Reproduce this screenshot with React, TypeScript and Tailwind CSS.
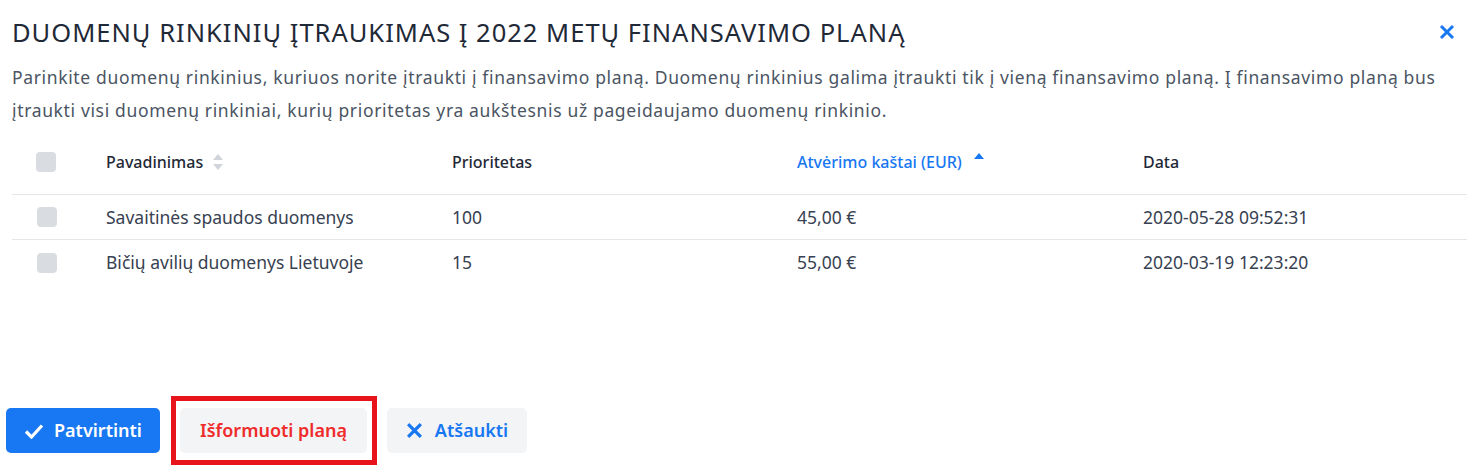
import React from "react";

const rows = [
  { name: "Savaitinės spaudos duomenys", priority: "100", cost: "45,00 €", date: "2020-05-28 09:52:31" },
  { name: "Bičių avilių duomenys Lietuvoje", priority: "15", cost: "55,00 €", date: "2020-03-19 12:23:20" },
];

const Checkbox = () => <span className="block w-[20px] h-[20px] rounded-[4px] bg-[#d9dce1]" />;

const SortBoth = () => (
  <svg width="12" height="20" viewBox="0 0 12 20" className="ml-[9px]">
    <path d="M6 2 L11 8 L1 8 Z" fill="#d1d5db" />
    <path d="M6 18 L11 12 L1 12 Z" fill="#d1d5db" />
  </svg>
);

const SortUp = () => (
  <svg width="12" height="8" viewBox="0 0 12 8" className="ml-[11px] -mt-[12px]">
    <path d="M6 1 L11 7 L1 7 Z" fill="#1877f2" />
  </svg>
);

const App: React.FC = () => {
  return (
    <div className="w-[1479px] h-[475px] bg-white flex flex-col font-['Noto_Sans',sans-serif] overflow-hidden">
      {/* Title */}
      <div className="flex items-center justify-between pl-[12px] pr-[24px] pt-[12px] h-[52px]">
        <h1 className="text-[25.5px] text-[#1f2937] tracking-[1px]">
          DUOMENŲ RINKINIŲ ĮTRAUKIMAS Į 2022 METŲ FINANSAVIMO PLANĄ
        </h1>
        <svg width="16" height="16" viewBox="0 0 16 16">
          <path d="M2 2 L14 14 M14 2 L2 14" stroke="#1877f2" strokeWidth="3" />
        </svg>
      </div>

      {/* Description */}
      <p className="pl-[12px] pr-[6px] mt-[9px] text-[17.5px] leading-[33px] tracking-[0.65px] text-[#4b5563]">
        Parinkite duomenų rinkinius, kuriuos norite įtraukti į finansavimo planą. Duomenų rinkinius galima įtraukti tik į vieną finansavimo planą. Į finansavimo planą bus įtraukti visi duomenų rinkiniai, kurių prioritetas yra aukštesnis už pageidaujamo duomenų rinkinio.
      </p>

      {/* Table */}
      <div className="mx-[12px] mt-[2px]">
        <div className="grid grid-cols-[94px_346px_345px_346px_1fr] items-center h-[66px] border-b border-[#e5e7eb] text-[16px] font-medium text-[#1f2937]">
          <div className="pl-[24px]"><Checkbox /></div>
          <div className="flex items-center">Pavadinimas<SortBoth /></div>
          <div>Prioritetas</div>
          <div className="flex items-center text-[#1877f2]">Atvėrimo kaštai (EUR)<SortUp /></div>
          <div>Data</div>
        </div>
        {rows.map((r) => (
          <div
            key={r.name}
            className="grid grid-cols-[94px_346px_345px_346px_1fr] items-center h-[45px] border-b border-[#e5e7eb] last:border-b-0 text-[17.5px] text-[#374151]"
          >
            <div className="pl-[25px]"><Checkbox /></div>
            <div>{r.name}</div>
            <div>{r.priority}</div>
            <div>{r.cost}</div>
            <div>{r.date}</div>
          </div>
        ))}
      </div>

      {/* Actions */}
      <div className="flex items-center pl-[6px] mt-auto mb-[10px]">
        <button className="flex items-center justify-center gap-[10px] w-[154px] h-[45px] rounded-[5px] bg-[#1877f2] text-white text-[18px] font-semibold">
          <svg width="20" height="16" viewBox="0 0 20 16">
            <path d="M2 8.5 L7.5 14 L18 2.5" stroke="white" strokeWidth="3.2" fill="none" />
          </svg>
          Patvirtinti
        </button>
        <div className="ml-[11px] border-[5px] border-[#e8141c] pl-[4px] pr-[5px] py-[7px]">
          <button className="h-[45px] w-[187px] rounded-[5px] bg-[#f3f4f6] text-[#ef2b2b] text-[18px] font-semibold">
            Išformuoti planą
          </button>
        </div>
        <button className="ml-[10px] flex items-center justify-center gap-[12px] w-[140px] h-[45px] rounded-[5px] bg-[#f3f4f6] text-[#1877f2] text-[18px] font-semibold">
          <svg width="17" height="17" viewBox="0 0 16 16">
            <path d="M2 2 L14 14 M14 2 L2 14" stroke="#1877f2" strokeWidth="3" />
          </svg>
          Atšaukti
        </button>
      </div>
    </div>
  );
};

export default App;
